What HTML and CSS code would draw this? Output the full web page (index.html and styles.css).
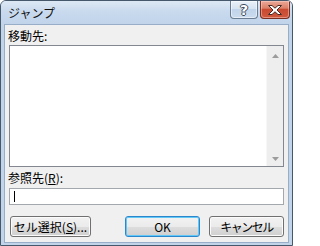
FILE: index.html
```html
<!DOCTYPE html>
<html lang="ja">
<head>
<meta charset="utf-8">
<title>ジャンプ</title>
<link rel="stylesheet" href="styles.css">
</head>
<body>
<div class="window">
  <div class="titlebar">
    <span class="title">ジャンプ</span>
    <div class="caption-buttons">
      <div class="cap-btn help"><span class="help-glyph">?</span></div>
      <div class="cap-btn close">
        <svg width="14" height="10" viewBox="0 0 14 10" class="close-x">
          <polygon points="0.5,0.5 4,0.5 7,3.2 10,0.5 13.5,0.5 9,5 13.5,9.5 10,9.5 7,6.8 4,9.5 0.5,9.5 5,5" fill="#ffffff" stroke="#4a2a25" stroke-width="1" stroke-linejoin="round"/>
        </svg>
      </div>
    </div>
  </div>
  <div class="client">
    <div class="label label-goto">移動先:</div>
    <div class="listbox">
      <div class="list-area"></div>
      <div class="vscroll">
        <svg class="arrow" width="17" height="17" viewBox="0 0 17 17"><polygon points="5,12 8.5,8 12,12" fill="#9c9c9c"/></svg>
        <div class="track"></div>
        <svg class="arrow" width="17" height="17" viewBox="0 0 17 17"><polygon points="5,8 12,8 8.5,12" fill="#9c9c9c"/></svg>
      </div>
    </div>
    <div class="label label-ref">参照先(<u>R</u>):</div>
    <div class="textbox"><span class="caret"></span></div>
    <div class="button-row">
      <button class="btn btn-select">セル選択(<u>S</u>)...</button>
      <div class="spacer"></div>
      <button class="btn btn-default">OK</button>
      <button class="btn btn-cancel">キャンセル</button>
    </div>
  </div>
</div>
</body>
</html>
```
FILE: styles.css
```css
html, body {
  margin: 0;
  padding: 0;
  background: #ffffff;
}

body {
  font-family: "Noto Sans CJK JP", "Noto Sans", sans-serif;
  font-size: 12px;
  color: #000000;
}

.window {
  width: 293px;
  height: 246px;
  box-sizing: border-box;
  border: 1px solid #46586c;
  border-radius: 6px 6px 0 0;
  background: #c1d4ea;
  display: flex;
  flex-direction: column;
  overflow: hidden;
}

.titlebar {
  height: 23px;
  flex: none;
  display: flex;
  align-items: center;
  justify-content: space-between;
  padding: 0 2px 0 7px;
  background: linear-gradient(#dde8f4 0%, #c9daee 45%, #c1d4ea 100%);
}

.title {
  font-size: 12px;
  line-height: 16px;
  color: #111111;
  margin-top: 1px;
}

.caption-buttons {
  align-self: flex-start;
  display: flex;
  gap: 2px;
}

.cap-btn {
  height: 18px;
  box-sizing: border-box;
  border-radius: 0 0 4px 4px;
  display: flex;
  align-items: center;
  justify-content: center;
}

.help {
  width: 28px;
  border: 1px solid #6a7d93;
  border-top: none;
  background: linear-gradient(#eaf1f8 0%, #d6e3f1 45%, #c2d4e9 50%, #cbdcee 100%);
  box-shadow: inset 0 0 0 1px rgba(255, 255, 255, 0.5);
}

.help-glyph {
  font-family: "DejaVu Sans", sans-serif;
  font-weight: bold;
  font-size: 14px;
  line-height: 14px;
  color: #ffffff;
  text-shadow: 1px 0 0 #3b4a5c, -1px 0 0 #3b4a5c, 0 1px 0 #3b4a5c, 0 -1px 0 #3b4a5c;
}

.close {
  width: 30px;
  border: 1px solid #7a2d21;
  border-top: none;
  background: linear-gradient(#eba999 0%, #dc8068 42%, #c94a31 50%, #d0593e 100%);
  box-shadow: inset 0 0 0 1px rgba(255, 220, 210, 0.45);
}

.close-x {
  display: block;
}

.client {
  flex: 1;
  margin: 0 3px 2px 3px;
  border: 1px solid #98aec8;
  background: #f0f0f0;
  padding: 0 4px;
  display: flex;
  flex-direction: column;
}

.label {
  line-height: 16px;
  height: 16px;
  margin-left: -1px;
  white-space: nowrap;
}

.label-goto {
  margin-top: 3px;
}

.label-ref {
  margin-top: 3px;
}

.listbox {
  margin-top: 1px;
  height: 122px;
  box-sizing: border-box;
  border: 1px solid #828790;
  background: #ffffff;
  display: flex;
}

.list-area {
  flex: 1;
}

.vscroll {
  width: 17px;
  display: flex;
  flex-direction: column;
  background: #eeeeee;
  border-left: 1px solid #f7f7f7;
  box-sizing: border-box;
}

.arrow {
  display: block;
  flex: none;
}

.track {
  flex: 1;
}

.textbox {
  margin-top: 2px;
  height: 17px;
  box-sizing: border-box;
  border: 1px solid #a3a7ae;
  background: #ffffff;
  display: flex;
  align-items: flex-start;
}

.caret {
  width: 1px;
  height: 11px;
  margin: 2px 0 0 4px;
  background: #000000;
}

.button-row {
  margin-top: 11px;
  height: 21px;
  display: flex;
}

.spacer {
  flex: 1;
}

.btn {
  height: 21px;
  box-sizing: border-box;
  padding: 0;
  font-family: "Noto Sans CJK JP", "Noto Sans", sans-serif;
  font-size: 12px;
  line-height: 17px;
  color: #000000;
  border: 1px solid #707070;
  border-radius: 3px;
  background: linear-gradient(#f2f2f2 0%, #ebebeb 50%, #dddddd 51%, #cfcfcf 100%);
  box-shadow: inset 0 0 0 1px #fbfbfb;
  white-space: nowrap;
}

.btn u {
  text-underline-offset: 1px;
}

.btn-select {
  width: 81px;
  margin-left: 1px;
}

.btn-default {
  width: 75px;
  border-color: #2c86cc;
  box-shadow: inset 0 0 0 1px #62c8f6;
}

.btn-cancel {
  width: 75px;
  margin-left: 9px;
  letter-spacing: -1.5px;
}
```
